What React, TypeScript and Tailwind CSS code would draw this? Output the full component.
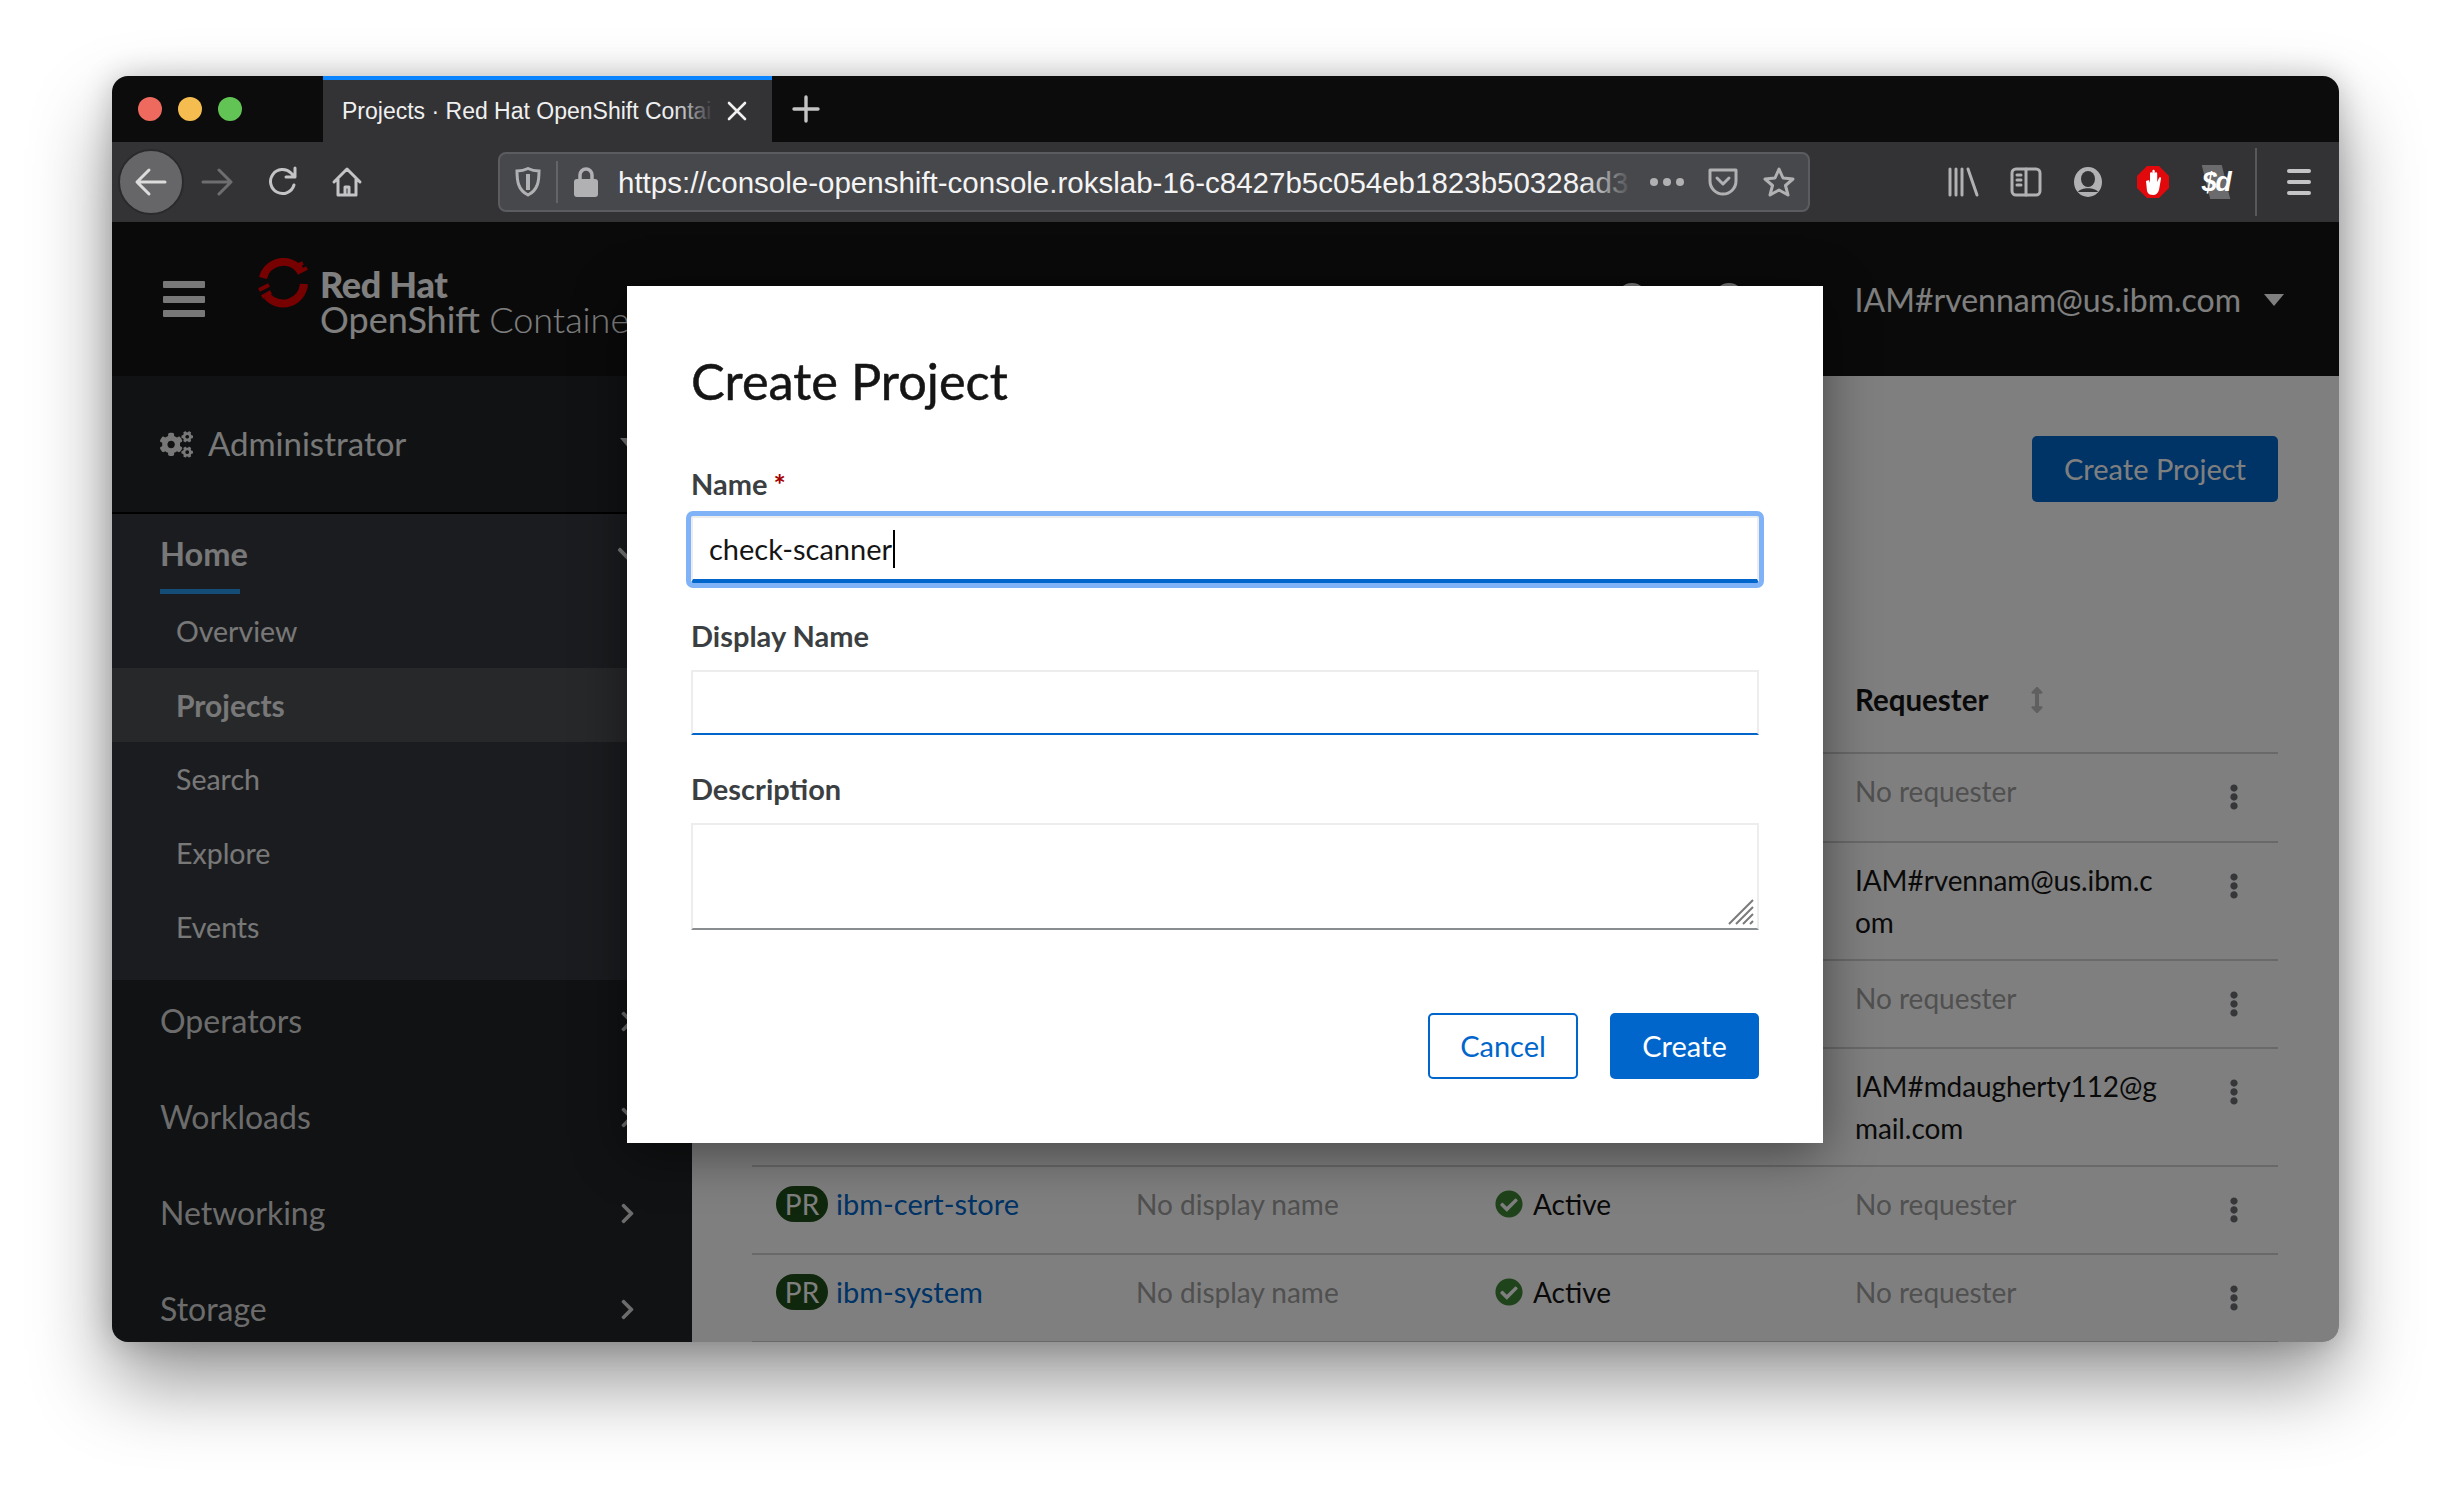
import React from "react";
import { FaCogs, FaCheckCircle, FaEllipsisV, FaArrowsAltV, FaChevronRight, FaChevronDown } from "react-icons/fa";

const sans = "font-['Lato','Noto_Sans',sans-serif]";

function Ic({ w = 32, h = 32, vb = "0 0 32 32", children, className = "" }: { w?: number; h?: number; vb?: string; children: React.ReactNode; className?: string }) {
  return (
    <svg width={w} height={h} viewBox={vb} className={className} fill="none" stroke="#b1b1b3" strokeWidth={3} strokeLinecap="round" strokeLinejoin="round">
      {children}
    </svg>
  );
}

function Caret({ className = "" }: { className?: string }) {
  return (
    <svg width="20" height="12" viewBox="0 0 20 12" className={className} fill="currentColor">
      <path d="M0 0h20L10 12z" />
    </svg>
  );
}

function TabStrip() {
  return (
    <div className="flex h-[66px] items-stretch bg-[#0c0c0c]">
      <div className="flex w-[211px] items-center gap-[16px] pl-[26px]">
        <div className="h-[24px] w-[24px] rounded-full bg-[#ee6a5f]" />
        <div className="h-[24px] w-[24px] rounded-full bg-[#f5bd4f]" />
        <div className="h-[24px] w-[24px] rounded-full bg-[#61c454]" />
      </div>
      <div className="flex w-[449px] items-center border-t-[4px] border-[#0a84ff] bg-[#333336] pl-[19px] pr-[24px]">
        <div className="relative w-[372px] shrink-0 overflow-hidden whitespace-nowrap font-['Liberation_Sans',sans-serif] text-[23px] text-[#f0f0f0]">
          Projects · Red Hat OpenShift Contai
          <div className="absolute inset-y-0 right-0 w-[40px] bg-gradient-to-r from-transparent to-[#333336]" />
        </div>
        <svg width="22" height="22" viewBox="0 0 22 22" className="ml-[12px]" stroke="#f0f0f0" strokeWidth="2.6" strokeLinecap="round">
          <path d="M3 3l16 16M19 3L3 19" />
        </svg>
      </div>
      <div className="flex w-[68px] items-center justify-center">
        <svg width="28" height="28" viewBox="0 0 28 28" stroke="#c4c4c4" strokeWidth="3.4" strokeLinecap="round">
          <path d="M14 2v24M2 14h24" />
        </svg>
      </div>
    </div>
  );
}

function Toolbar() {
  return (
    <div className="flex h-[80px] items-center bg-[#333336] pl-[6px] pr-[20px]">
      <div className="flex h-[66px] w-[66px] shrink-0 items-center justify-center rounded-full border-[2px] border-[#2a2a2c] bg-[#666668]">
        <Ic w={34} h={34} vb="0 0 34 34"><path d="M31 17H4M15 5L3 17l12 12" stroke="#dcdcdc" /></Ic>
      </div>
      <div className="ml-[16px] flex w-[34px] justify-center">
        <Ic w={32} h={32}><path d="M2 16h27M18 4l12 12-12 12" stroke="#6e6e70" /></Ic>
      </div>
      <div className="ml-[33px] flex w-[32px] justify-center">
        <Ic w={32} h={32}><path d="M27 19a12 12 0 1 1-3-12l4 4M28 2v9h-9" stroke="#c4c4c6" /></Ic>
      </div>
      <div className="ml-[32px] flex w-[32px] justify-center">
        <Ic w={32} h={32}><path d="M3 16L16 3l13 13M7 13v16h18V13M14 29v-8h4v8" stroke="#c4c4c6" /></Ic>
      </div>
      <div className="ml-[135px] flex h-[60px] w-[1312px] shrink-0 items-center rounded-[8px] border-[2px] border-[#5b5c5f] bg-[#47484b]">
        <div className="flex w-[56px] justify-center">
          <svg width="26" height="30" viewBox="0 0 26 30" fill="none" stroke="#b1b1b3" strokeWidth="3">
            <path d="M2 4c4 0 8-1 11-2.500C16 3 20 4 24 4c0 10-1 19-11 24C3 23 2 14 2 4z" />
            <path d="M13 7v16" strokeWidth="4" />
          </svg>
        </div>
        <div className="h-[42px] w-[2px] bg-[#63646a]" />
        <div className="flex w-[56px] justify-center">
          <svg width="26" height="30" viewBox="0 0 26 30">
            <path d="M7 13V8a6 6 0 0 1 12 0v5" fill="none" stroke="#b1b1b3" strokeWidth="3.500" />
            <rect x="1" y="12" width="24" height="18" rx="3" fill="#b1b1b3" />
          </svg>
        </div>
        <div className="relative ml-[4px] mt-[2px] w-[1014px] overflow-hidden whitespace-nowrap font-['Liberation_Sans',sans-serif] text-[29.5px] text-[#f4f4f4]">
          https://console-openshift-console.rokslab-16-c8427b5c054eb1823b50328ad3
          <div className="absolute inset-y-0 right-0 w-[50px] bg-gradient-to-r from-transparent to-[#47484b]" />
        </div>
        <div className="ml-[18px] flex w-[34px] justify-between">
          <div className="h-[8px] w-[8px] rounded-full bg-[#b1b1b3]" />
          <div className="h-[8px] w-[8px] rounded-full bg-[#b1b1b3]" />
          <div className="h-[8px] w-[8px] rounded-full bg-[#b1b1b3]" />
        </div>
        <div className="ml-[23px]">
          <Ic w={32} h={30} vb="0 0 32 30"><path d="M3 3h26v11a13 13 0 0 1-26 0z" /><path d="M10 11l6 6 6-6" /></Ic>
        </div>
        <div className="ml-[24px]">
          <Ic w={32} h={32}><path d="M16 3l4 9 10 1-7.500 6.500L25 29l-9-5-9 5 2.500-9.500L2 13l10-1z" /></Ic>
        </div>
      </div>
      <div className="ml-[137px]">
        <Ic w={32} h={30} vb="0 0 32 30"><path d="M3 2v26M9 2v26M15 2v26M21 2l9 26" /></Ic>
      </div>
      <div className="ml-[31px]">
        <Ic w={32} h={30} vb="0 0 32 30">
          <rect x="2" y="2" width="28" height="26" rx="4" />
          <path d="M16 2v26M7 8h4M7 13h4M7 18h4" />
        </Ic>
      </div>
      <div className="ml-[32px]">
        <svg width="28" height="30" viewBox="0 0 28 30">
          <ellipse cx="14" cy="15" rx="14" ry="15" fill="#b1b1b3" />
          <ellipse cx="14" cy="12" rx="7" ry="8" fill="#333336" />
          <path d="M4 25c3-5 17-5 20 0" fill="#333336" />
        </svg>
      </div>
      <div className="ml-[35px]">
        <svg width="32" height="32" viewBox="0 0 32 32">
          <path d="M10 0h12l10 10v12L22 32H10L0 22V10z" fill="#e2090d" />
          <path d="M9 15l3-1 1 3V7.500a1.200 1.200 0 0 1 2.400 0V5a1.200 1.200 0 0 1 2.400 0v2.500a1.200 1.200 0 0 1 2.400 0V16l1.800-4a1 1 0 0 1 2 .6L22 24c-1 3-3 5-6 5-3 0-5-1-6-4z" fill="#fff" />
        </svg>
      </div>
      <div className="relative ml-[31px] flex h-[34px] w-[32px] items-center justify-center">
        <div className="absolute inset-y-0 left-[6px] w-[20px] skew-x-[14deg] bg-[#6b6b6d]" />
        <span className="relative font-['Liberation_Sans',sans-serif] text-[27px] font-bold italic leading-none tracking-[-1.5px] text-white">$d</span>
      </div>
      <div className="ml-[23px] h-[68px] w-[2px] bg-[#58585a]" />
      <div className="ml-[30px] flex h-[26px] w-[24px] flex-col justify-between">
        <div className="h-[4px] rounded bg-[#c4c4c6]" />
        <div className="h-[4px] rounded bg-[#c4c4c6]" />
        <div className="h-[4px] rounded bg-[#c4c4c6]" />
      </div>
    </div>
  );
}

function Masthead() {
  return (
    <div className={`flex h-[154px] items-center bg-[#151515] pl-[51px] pr-[55px] ${sans} text-[#fff]`}>
      <div className="flex h-[36px] w-[42px] flex-col justify-between">
        <div className="h-[7px] rounded-[1px] bg-[#f0f0f0]" />
        <div className="h-[7px] rounded-[1px] bg-[#f0f0f0]" />
        <div className="h-[7px] rounded-[1px] bg-[#f0f0f0]" />
      </div>
      <div className="ml-[51px] mt-[-30px] h-[52px] w-[52px]">
        <svg width="54" height="52" viewBox="0 0 54 52" fill="none">
          <path d="M44 12A21 21 0 0 0 7 20" stroke="#ee0000" strokeWidth="8" />
          <path d="M48 26A21 21 0 0 1 11 38" stroke="#ee0000" strokeWidth="8" />
          <path d="M41 15l10-5M3 32l10-5M6 39l9-5M38 9l9-4" stroke="#ee0000" strokeWidth="4" />
        </svg>
      </div>
      <div className="ml-[12px] mt-[6px] flex w-[420px] flex-col whitespace-nowrap">
        <span className="text-[36px] font-black leading-[35px] tracking-[-0.3px]">Red Hat</span>
        <span className="text-[36px] leading-[35px]"><span>OpenShift</span> <span className="font-light">Container Platform</span></span>
      </div>
      <div className="ml-[877px] mt-[-2px] flex gap-[67px]">
        <div className="h-[30px] w-[30px] rounded-full bg-[#f0f0f0]" />
        <div className="h-[30px] w-[30px] rounded-full bg-[#f0f0f0]" />
      </div>
      <div className="ml-auto mt-[2px] flex items-center whitespace-nowrap text-[32px]">
        IAM#rvennam@us.ibm.com
        <Caret className="ml-[23px]" />
      </div>
    </div>
  );
}

function Sidebar() {
  return (
    <div className={`flex w-[580px] shrink-0 flex-col bg-[#212427] ${sans} text-[#f0f0f0]`}>
      <div className="flex h-[138px] shrink-0 items-center border-b-[2px] border-[#030303] pl-[48px] pr-[52px]">
        <FaCogs className="text-[33px]" />
        <span className="ml-[15px] text-[33px]">Administrator</span>
        <Caret className="ml-auto" />
      </div>
      <div className="h-[466px] shrink-0 bg-[#36393f]">
        <div className="h-[80px] pl-[48px] pr-[52px]">
          <div className="flex h-[80px] items-center justify-between">
            <span className="relative flex h-[80px] w-[80px] items-center whitespace-nowrap text-[32.5px] font-bold">
              Home
              <span className="absolute bottom-0 left-0 h-[5px] w-[80px] bg-[#2b9af3]" />
            </span>
            <FaChevronDown className="text-[24px]" />
          </div>
        </div>
        {["Overview", "Projects", "Search", "Explore", "Events"].map((t) => (
          <div key={t} className={`flex h-[74px] items-center pl-[64px] ${t === "Projects" ? "bg-[#4f5155] text-[30px] font-bold" : "text-[28.5px]"}`}>
            {t}
          </div>
        ))}
      </div>
      <div className="flex flex-col gap-[14px]">
        {["Operators", "Workloads", "Networking", "Storage"].map((t) => (
          <div key={t} className="flex h-[82px] shrink-0 items-center pl-[48px] pr-[53px] text-[32px] text-[#d8d8d8]">
            {t}
            <FaChevronRight className="ml-auto text-[23px]" />
          </div>
        ))}
      </div>
    </div>
  );
}

const gridCols = "grid grid-cols-[384px_359px_360px_366px_1fr]";

function Row({ h, name, req, wrap }: { h: number; name?: string; req?: string; wrap?: [string, string] }) {
  return (
    <div style={{ height: h }} className={`${gridCols} border-b-[2px] border-[#d2d2d2] pt-[16px]`}>
      <div className="flex items-start pl-[24px]">
        {name && (
          <>
            <span className="mt-[3px] flex h-[36px] w-[52px] items-center justify-center rounded-full bg-[#1e4f18] text-[28px] leading-[36px] text-white">PR</span>
            <span className="ml-[8px] text-[29px] text-[#0066cc]">{name}</span>
          </>
        )}
      </div>
      <div className="text-[28px] text-[#a0a0a0]">{name ? "No display name" : ""}</div>
      <div className="flex items-start">
        {name && (
          <>
            <FaCheckCircle className="mt-[7px] text-[28px] text-[#3e8635]" />
            <span className="ml-[10px] text-[28px] text-[#151515]">Active</span>
          </>
        )}
      </div>
      <div>
        {wrap ? (
          <span className="text-[28px] tracking-[-0.1px] text-[#151515]">{wrap[0]}<br />{wrap[1]}</span>
        ) : (
          <span className="text-[28px] text-[#a0a0a0]">{req}</span>
        )}
      </div>
      <div className="pt-[14px]">
        <FaEllipsisV className="text-[26px] text-[#6a6e73]" />
      </div>
    </div>
  );
}

function Main() {
  return (
    <div className={`flex-1 bg-white pl-[60px] pr-[61px] pt-[60px] text-[29px] leading-[42px] ${sans}`}>
      <div className="flex justify-end">
        <div className="flex h-[66px] w-[246px] items-center justify-center rounded-[5px] bg-[#0066cc] text-white">Create Project</div>
      </div>
      <div className={`${gridCols} mt-[152px] h-[100px] items-center border-b-[2px] border-[#d2d2d2] pb-[6px]`}>
        <div />
        <div />
        <div />
        <div className="flex items-center text-[29.5px] font-bold text-[#151515]">
          Requester
          <FaArrowsAltV className="ml-[36px] text-[26px] text-[#c0c0c0]" />
        </div>
      </div>
      <Row h={89} req="No requester" />
      <Row h={118} wrap={["IAM#rvennam@us.ibm.c", "om"]} />
      <Row h={88} req="No requester" />
      <Row h={118} wrap={["IAM#mdaugherty112@g", "mail.com"]} />
      <Row h={88} name="ibm-cert-store" req="No requester" />
      <Row h={88} name="ibm-system" req="No requester" />
    </div>
  );
}

function Field({ label, req, children, className = "" }: { label: string; req?: boolean; children: React.ReactNode; className?: string }) {
  return (
    <div className={className}>
      <div className="text-[29px] font-bold leading-[42px] text-[#3c3f42]">
        {label}
        {req && <span className="ml-[6px] text-[#a30000]">*</span>}
      </div>
      {children}
    </div>
  );
}

function Modal() {
  return (
    <div className={`absolute left-[515px] top-[64px] h-[857px] w-[1196px] bg-white px-[64px] pt-[66px] shadow-[0_10px_50px_rgba(0,0,0,0.45)] ${sans}`}>
      <h1 className="text-[50.500px] font-normal leading-[58px] text-[#151515] [-webkit-text-stroke:0.5px_#151515]">Create Project</h1>
      <Field label="Name" req className="mt-[53px]">
        <div className="relative mt-[11px] flex h-[67px] items-center rounded-[2px] border-x-[2px] border-t-[2px] border-b-[4px] border-[#ededed] border-b-[#0066cc] pl-[16px] text-[29px] text-[#151515] outline outline-[5px] outline-[#7fb2f7]">
          check-scanner
          <span className="ml-[1px] h-[38px] w-[2px] bg-black" />
        </div>
      </Field>
      <Field label="Display Name" className="mt-[32px]">
        <div className="mt-[13px] h-[65px] border-x-[2px] border-t-[2px] border-b-[2px] border-[#ededed] border-b-[#0066cc]" />
      </Field>
      <Field label="Description" className="mt-[33px]">
        <div className="relative mt-[13px] h-[107px] border-x-[2px] border-t-[2px] border-b-[2px] border-[#ededed] border-b-[#8a8d90]">
          <svg width="28" height="28" viewBox="0 0 28 28" className="absolute bottom-[2px] right-[2px]" stroke="#7a7a7a" strokeWidth="2">
            <path d="M2 26L26 2M9 26L26 9M16 26L26 16M23 26l3-3" />
          </svg>
        </div>
      </Field>
      <div className="mt-[83px] flex justify-end gap-[32px] text-[29px]">
        <div className="flex h-[66px] w-[150px] items-center justify-center rounded-[5px] border-[2px] border-[#0066cc] text-[#0066cc]">Cancel</div>
        <div className="flex h-[66px] w-[149px] items-center justify-center rounded-[5px] bg-[#0066cc] text-white">Create</div>
      </div>
    </div>
  );
}

export default function App() {
  return (
    <div className="h-[1490px] w-[2450px] overflow-hidden bg-white pl-[112px] pt-[76px]">
      <div className="flex h-[1266px] w-[2227px] flex-col overflow-hidden rounded-[16px] shadow-[0_40px_80px_rgba(0,0,0,0.42),0_0_30px_rgba(0,0,0,0.2)]">
        <TabStrip />
        <Toolbar />
        <div className="relative min-h-0 flex-1">
          <div className="flex h-full flex-col">
            <Masthead />
            <div className="flex min-h-0 flex-1">
              <Sidebar />
              <Main />
            </div>
          </div>
          <div className="absolute inset-0 bg-black/50" />
          <Modal />
        </div>
      </div>
    </div>
  );
}
